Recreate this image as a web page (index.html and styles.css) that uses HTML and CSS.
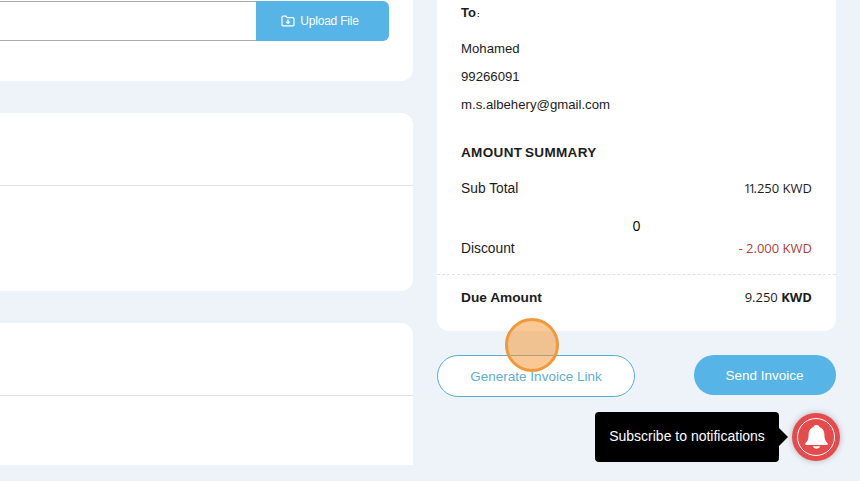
FILE: index.html
```html
<!DOCTYPE html>
<html lang="en">
<head>
    <meta charset="UTF-8">
    <meta name="viewport" content="width=device-width, initial-scale=1.0">
    <title>Create Invoice</title>
    <link rel="stylesheet" href="styles.css">
</head>
<body>
    <div class="page">
        <div class="left-col">
            <section class="card card-upload">
                <div class="upload-row">
                    <div class="file-input"></div>
                    <button class="upload-btn" type="button">
                        <svg width="14" height="12" viewBox="0 0 14 12" fill="none" stroke="#fff" stroke-width="1.2">
                            <path d="M1 2.2c0-.6.4-1 1-1h3l1.2 1.4H12c.6 0 1 .4 1 1v6.2c0 .6-.4 1-1 1H2c-.6 0-1-.4-1-1z"/>
                            <path d="M7 4.6v3.6M5.3 6.7 7 8.4l1.700-1.700" stroke-width="1.300"/>
                        </svg>
                        Upload File
                    </button>
                </div>
            </section>
            <section class="card card-second">
                <div class="card-head"></div>
            </section>
            <section class="card card-third">
                <div class="card-head"></div>
            </section>
        </div>

        <div class="right-col">
            <section class="card summary">
                <div class="summary-body">
                    <h4 class="to-title">To<span class="colon">:</span></h4>
                    <p class="line">Mohamed</p>
                    <p class="line">99266091</p>
                    <p class="line">m.s.albehery@gmail.com</p>
                    <h4 class="amount-title">AMOUNT SUMMARY</h4>
                    <div class="row">
                        <span>Sub Total</span>
                        <span class="num"><span class="tight">11</span>.250 KWD</span>
                    </div>
                    <div class="zero">0</div>
                    <div class="row">
                        <span>Discount</span>
                        <span class="num red">- 2.000 KWD</span>
                    </div>
                </div>
                <div class="row total">
                    <strong>Due Amount</strong>
                    <span class="num">9.250 <strong>KWD</strong></span>
                </div>
            </section>
            <div class="actions">
                <button class="btn-outline" type="button">Generate Invoice Link</button>
                <button class="btn-send" type="button">Send Invoice</button>
            </div>
        </div>
    </div>

    <!-- click marker from the recording -->
    <div class="click-dot"></div>

    <div class="notify-tip">Subscribe to notifications</div>
    <div class="notify-bell">
        <svg width="25" height="26" viewBox="0 0 26 28" fill="#fff">
            <path d="M13 1c2.200 0 3.200 1.200 3.400 2.500C20.200 4.800 21.500 8 21.500 11.500c0 4.500 1 6.800 3.300 9 .9.900.5 2-.8 2H2c-1.300 0-1.700-1.100-.8-2 2.300-2.200 3.300-4.500 3.300-9 0-3.500 1.300-6.700 5.100-8C9.800 2.200 10.800 1 13 1z"/>
            <path d="M9 24h8c-.5 1.500-2.200 2.700-4 2.700S9.500 25.500 9 24z"/>
        </svg>
    </div>
</body>
</html>
```

FILE: styles.css
```css
* {
    box-sizing: border-box;
}
html, body {
    margin: 0;
    padding: 0;
    height: 100%;
    overflow: hidden;
}
body {
    background-color: #eef2f9;
    font-family: "Liberation Sans", Arial, sans-serif;
    color: #1c1c1c;
    font-size: 13.2px;
}
.page {
    display: flex;
    gap: 24px;
    height: 465px;
    overflow: hidden;
    margin-left: -40px;
}
.left-col {
    width: 453px;
    display: flex;
    flex-direction: column;
    gap: 32px;
    flex-shrink: 0;
}
.right-col {
    width: 399px;
    flex-shrink: 0;
}
.card {
    background-color: #fff;
    border-radius: 12px;
}
.card-upload {
    height: 81px;
    padding-top: 1px;
    border-radius: 0 0 12px 12px;
    flex-shrink: 0;
}
.upload-row {
    display: flex;
    height: 40px;
    padding-right: 24px;
}
.file-input {
    flex: 1;
    border: 1px solid #a9a9a9;
    border-left: none;
    border-right: none;
}
.upload-btn {
    width: 133px;
    display: flex;
    align-items: center;
    justify-content: center;
    gap: 5px;
    padding: 0 5px 0 0;
    background-color: #56b4e6;
    color: #fff;
    border: none;
    border-radius: 0 6px 6px 0;
    font-family: inherit;
    font-size: 12px;
    letter-spacing: -0.2px;
}
.card-second {
    height: 178px;
    flex-shrink: 0;
}
.card-third {
    height: 160px;
    flex-shrink: 0;
}
.card-head {
    height: 73px;
    border-bottom: 1px solid #e3e3e3;
}
.summary {
    height: 331px;
    border-radius: 0 0 12px 12px;
}
.summary-body {
    padding: 5px 24px 0;
}
.summary-body p, .summary-body h4 {
    margin: 0;
}
.to-title {
    font-size: 13px;
    line-height: 15px;
    font-weight: bold;
}
.colon {
    font-size: 8px;
    margin-left: 1px;
}
.line {
    line-height: 28px;
    font-size: 13.2px;
}
.line:first-of-type {
    margin-top: 13px;
}
.amount-title {
    font-size: 13.5px;
    line-height: 16px;
    margin-top: 26px !important;
    letter-spacing: 0.35px;
    word-spacing: -1.500px;
}
.row {
    display: flex;
    justify-content: space-between;
    align-items: center;
}
.summary-body .row {
    line-height: 16px;
}
.summary-body .row > span:first-child {
    font-size: 13.800px;
}
.summary-body .row:first-of-type {
    margin-top: 20px;
}
.num {
    font-family: "Open Sans", sans-serif;
    font-size: 13px;
    margin-top: -2px;
}
.tight {
    letter-spacing: -2.500px;
}
.red {
    color: #b5413a;
}
.zero {
    font-family: "Open Sans", sans-serif;
    font-size: 14px;
    color: #000;
    line-height: 20px;
    text-align: center;
    margin: 19px 0 5px;
}
.total {
    margin-top: 17px;
    padding: 14px 24px 0;
    border-top: 1px dashed #e2e2e2;
    line-height: 18px;
    font-size: 13.700px;
}
.actions {
    display: flex;
    justify-content: space-between;
    align-items: flex-start;
    margin-top: 24px;
}
.btn-outline {
    width: 198px;
    height: 42px;
    background-color: #fff;
    border: 1px solid #5aaecb;
    border-radius: 21px;
    color: #5fb0cf;
    font-family: inherit;
    font-size: 13.500px;
}
.btn-send {
    width: 142px;
    height: 40px;
    padding-right: 7px;
    background-color: #56b4e6;
    border: none;
    border-radius: 20px;
    color: #fff;
    font-family: inherit;
    font-size: 13.500px;
}
.click-dot {
    position: absolute;
    left: 505px;
    top: 318px;
    width: 54px;
    height: 54px;
    border-radius: 50%;
    background-color: rgba(243, 150, 50, 0.52);
    border: 3px solid #ee9a3c;
}
.notify-tip {
    position: absolute;
    left: 595px;
    top: 412px;
    width: 184px;
    height: 50px;
    background-color: #000;
    color: #fff;
    border-radius: 4px;
    font-size: 14px;
    line-height: 48px;
    text-align: center;
}
.notify-tip::after {
    content: "";
    position: absolute;
    left: 100%;
    top: 16px;
    border-left: 9px solid #000;
    border-top: 9px solid transparent;
    border-bottom: 9px solid transparent;
}
.notify-bell {
    position: absolute;
    left: 792px;
    top: 413px;
    width: 48px;
    height: 48px;
    border-radius: 50%;
    background-color: #e54b4d;
    box-shadow: 0 0 6px rgba(0, 0, 0, 0.25);
    display: flex;
    align-items: center;
    justify-content: center;
}
.notify-bell::before {
    content: "";
    position: absolute;
    left: 5px;
    top: 5px;
    right: 5px;
    bottom: 5px;
    border: 1.500px solid #fff;
    border-radius: 50%;
}
```
